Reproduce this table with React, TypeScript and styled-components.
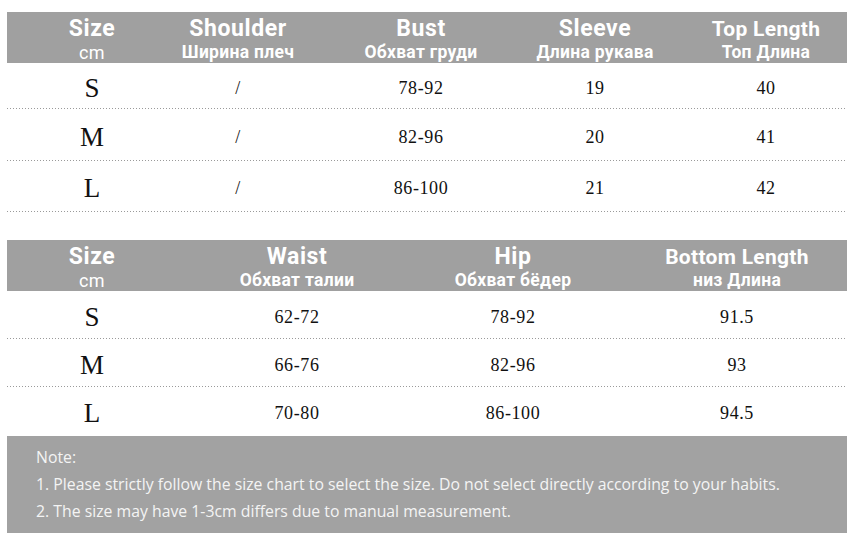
import React from 'react';
import styled, { createGlobalStyle } from 'styled-components';

type Col = { title: string; sub: string; width: number; shift?: number; small?: boolean; light?: boolean };

const TOP_COLS: Col[] = [
  { title: 'Size', sub: 'cm', width: 170, light: true },
  { title: 'Shoulder', sub: 'Ширина плеч', width: 122 },
  { title: 'Bust', sub: 'Обхват груди', width: 244 },
  { title: 'Sleeve', sub: 'Длина рукава', width: 104 },
  { title: 'Top Length', sub: 'Топ Длина', width: 200, shift: 38, small: true },
];

const TOP_ROWS = [
  ['S', '/', '78-92', '19', '40'],
  ['M', '/', '82-96', '20', '41'],
  ['L', '/', '86-100', '21', '42'],
];

const BOTTOM_COLS: Col[] = [
  { title: 'Size', sub: 'cm', width: 170, light: true },
  { title: 'Waist', sub: 'Обхват талии', width: 240 },
  { title: 'Hip', sub: 'Обхват бёдер', width: 192 },
  { title: 'Bottom Length', sub: 'низ Длина', width: 238, shift: 18, small: true },
];

const BOTTOM_ROWS = [
  ['S', '62-72', '78-92', '91.5'],
  ['M', '66-76', '82-96', '93'],
  ['L', '70-80', '86-100', '94.5'],
];

const NOTES = [
  '1. Please strictly follow the size chart to select the size. Do not select directly according to your habits.',
  '2. The size may have 1-3cm differs due to manual measurement.',
];

const SizeTable = ({ cols, rows, rowHeight, lastLine }: { cols: Col[]; rows: string[][]; rowHeight: number[]; lastLine: boolean }) => {
  const template = cols.map(c => `${c.width}px`).join(' ');
  return (
    <Table>
      <HeadRow $template={template}>
        {cols.map(c => (
          <HeadCell key={c.title} $shift={c.shift || 0}>
            <Title $small={c.small}>{c.title}</Title>
            <Sub $light={c.light}>{c.sub}</Sub>
          </HeadCell>
        ))}
      </HeadRow>
      {rows.map((row, i) => (
        <Row
          key={row[0]}
          $template={template}
          $height={rowHeight[i]}
          $line={i < rows.length - 1 || lastLine}
        >
          {row.map((val, j) => (
            <Cell key={j} $shift={cols[j].shift || 0} $big={j === 0}>
              {val}
            </Cell>
          ))}
        </Row>
      ))}
    </Table>
  );
};

export default function App() {
  return (
    <>
      <GlobalStyle />
      <Page>
        <SizeTable cols={TOP_COLS} rows={TOP_ROWS} rowHeight={[46, 52, 51]} lastLine />
        <Spacer />
        <SizeTable cols={BOTTOM_COLS} rows={BOTTOM_ROWS} rowHeight={[48, 48, 49]} lastLine={false} />
        <NoteBox>
          <NoteLine>Note:</NoteLine>
          {NOTES.map(n => (
            <NoteLine key={n}>{n}</NoteLine>
          ))}
        </NoteBox>
      </Page>
    </>
  );
}

const GlobalStyle = createGlobalStyle`
  body {
    margin: 0;
    background: #fff;
  }
`;

const Page = styled.div`
  width: 840px;
  padding: 12px 0 0 7px;
`;

const Table = styled.div`
  display: flex;
  flex-direction: column;
`;

const HeadRow = styled.div<{ $template: string }>`
  display: grid;
  grid-template-columns: ${p => p.$template};
  height: 51px;
  background: #a0a0a0;
  color: #fff;
  font-family: Roboto, 'Liberation Sans', sans-serif;
`;

const HeadCell = styled.div<{ $shift: number }>`
  display: flex;
  flex-direction: column;
  align-items: center;
  padding-top: 4px;
  padding-left: ${p => p.$shift}px;
`;

const Title = styled.div<{ $small?: boolean }>`
  font-size: ${p => (p.$small ? '21px' : '23px')};
  font-weight: 700;
  line-height: 26px;
  letter-spacing: ${p => (p.$small ? '0.3px' : '0.6px')};
  white-space: nowrap;
`;

const Sub = styled.div<{ $light?: boolean }>`
  font-size: ${p => (p.$light ? '18px' : '17.5px')};
  font-weight: ${p => (p.$light ? 400 : 700)};
  line-height: 21px;
  letter-spacing: ${p => (p.$light ? '0.5px' : '0.3px')};
  white-space: nowrap;
`;

const Row = styled.div<{ $template: string; $height: number; $line: boolean }>`
  position: relative;
  display: grid;
  grid-template-columns: ${p => p.$template};
  align-items: center;
  height: ${p => p.$height}px;
  font-family: 'Liberation Serif', 'Times New Roman', serif;
  color: #111;

  &::after {
    content: '';
    display: ${p => (p.$line ? 'block' : 'none')};
    position: absolute;
    left: 0;
    right: 0;
    bottom: 0;
    height: 1px;
    background: repeating-linear-gradient(to right, #9a9a9a 0 1px, transparent 1px 3px);
  }
`;

const Cell = styled.div<{ $shift: number; $big: boolean }>`
  text-align: center;
  padding-left: ${p => p.$shift}px;
  padding-top: 4px;
  font-size: ${p => (p.$big ? '27px' : '18px')};
  letter-spacing: ${p => (p.$big ? '0' : '0.6px')};
`;

const Spacer = styled.div`
  height: 28px;
`;

const NoteBox = styled.div`
  background: #a2a2a2;
  color: #f4f4f4;
  padding: 8px 0 8px 29px;
  font-family: 'Open Sans', 'Noto Sans', sans-serif;
  font-size: 15.8px;
`;

const NoteLine = styled.div`
  line-height: 27px;
  white-space: nowrap;
`;
